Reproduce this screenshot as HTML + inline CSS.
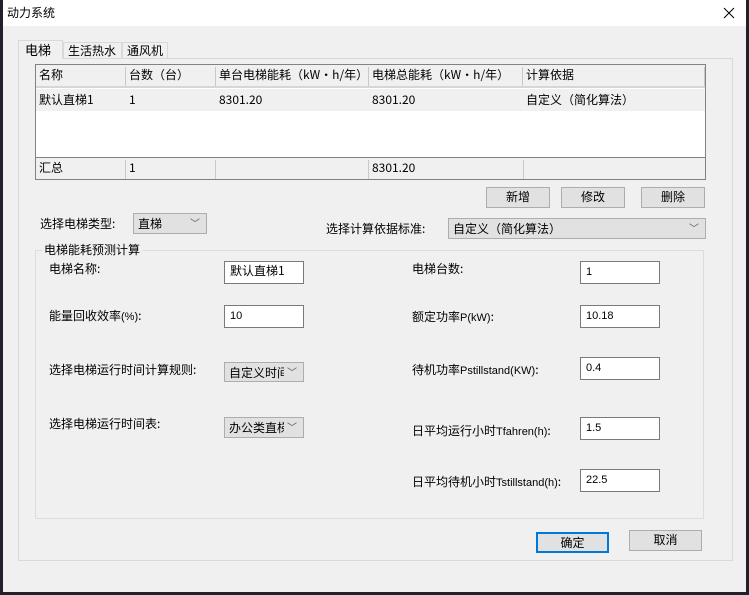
<!DOCTYPE html>
<html><head><meta charset="utf-8"><style>
*{margin:0;padding:0;box-sizing:border-box}
body{width:749px;height:595px;background:#1f2329;position:relative;overflow:hidden;font-family:"Noto Sans CJK SC","Liberation Sans",sans-serif;font-size:12px;color:#000}
.a{position:absolute}
.win{left:3px;top:0;width:743px;height:592px;background:#f0f0f0}
.title{left:3px;top:0;width:743px;height:26px;background:#fff}
.t{position:absolute;white-space:nowrap;line-height:14px;font-size:12px}
.l{font-family:"Liberation Sans",sans-serif;font-size:11px}
.inp{position:absolute;background:#fff;border:1px solid #7a7a7a;padding:3px 0 0 5px;font-size:11px;line-height:14px;font-family:"Liberation Sans",sans-serif}
.cmb{position:absolute;background:#e1e1e1;border:1px solid #adadad;padding:2px 0 0 4px;line-height:15px;overflow:hidden;white-space:nowrap;font-size:12px}
.cmb .ar{position:absolute;right:6px;top:1px;font-size:10px;color:#555}
.btn{position:absolute;background:#e1e1e1;border:1px solid #adadad;text-align:center;line-height:18px;font-size:12px}
.cell{position:absolute;white-space:nowrap;font-size:12px;line-height:14px}
</style></head><body>
<div class="a win"></div>
<div class="a title"></div>
<div class="t" style="left:7px;top:6px;font-size:12px">动力系统</div>
<svg class="a" style="left:723px;top:7px" width="12" height="12"><path d="M1 1L11 11M11 1L1 11" stroke="#000" stroke-width="1"/></svg>

<div class="a" style="left:18px;top:58px;width:715px;height:503px;border:1px solid #d9d9d9;background:#f0f0f0"></div>
<div class="a" style="left:18px;top:40px;width:45px;height:19px;border:1px solid #d9d9d9;border-bottom:none;background:#f0f0f0"></div>
<div class="a" style="left:63px;top:42px;width:59px;height:16px;border:1px solid #d9d9d9;border-bottom:none;background:#f0f0f0"></div>
<div class="a" style="left:122px;top:42px;width:46px;height:16px;border:1px solid #d9d9d9;border-bottom:none;background:#f0f0f0"></div>
<div class="t" style="left:25px;top:43px;font-size:13px">电梯</div>
<div class="t" style="left:68px;top:44px;font-size:12px">生活热水</div>
<div class="t" style="left:127px;top:44px;font-size:12px">通风机</div>

<div class="a" style="left:35px;top:64px;width:671px;height:116px;border:1px solid #828282;background:#fff"></div>
<div class="a" style="left:36px;top:65px;width:669px;height:23px;background:#f0f0f0;border-bottom:2px solid #d6d6d6"></div>
<div class="a" style="left:36px;top:89px;width:669px;height:22px;background:#f0f0f0"></div>
<div class="a" style="left:36px;top:157px;width:669px;height:22px;background:#f0f0f0;border-top:1px solid #828282"></div>
<div class="a" style="left:125px;top:67px;width:1px;height:19px;background:#c8c8c8"></div>
<div class="a" style="left:215px;top:67px;width:1px;height:19px;background:#c8c8c8"></div>
<div class="a" style="left:368px;top:67px;width:1px;height:19px;background:#c8c8c8"></div>
<div class="a" style="left:522px;top:67px;width:1px;height:19px;background:#c8c8c8"></div>
<div class="a" style="left:704px;top:67px;width:1px;height:19px;background:#c8c8c8"></div>
<div class="a" style="left:125px;top:160px;width:1px;height:19px;background:#c8c8c8"></div>
<div class="a" style="left:215px;top:160px;width:1px;height:19px;background:#c8c8c8"></div>
<div class="a" style="left:368px;top:160px;width:1px;height:19px;background:#c8c8c8"></div>
<div class="a" style="left:523px;top:160px;width:1px;height:19px;background:#c8c8c8"></div>
<div class="cell" style="left:39px;top:68px">名称</div>
<div class="cell" style="left:129px;top:68px">台数（台）</div>
<div class="cell" style="left:219px;top:68px">单台电梯能耗（kW·h/年）</div>
<div class="cell" style="left:372px;top:68px">电梯总能耗（kW·h/年）</div>
<div class="cell" style="left:526px;top:68px">计算依据</div>
<div class="cell" style="left:39px;top:93px">默认直梯1</div>
<div class="cell" style="left:129px;top:93px">1</div>
<div class="cell" style="left:219px;top:93px">8301.20</div>
<div class="cell" style="left:372px;top:93px">8301.20</div>
<div class="cell" style="left:526px;top:93px">自定义（简化算法）</div>
<div class="cell" style="left:39px;top:161px">汇总</div>
<div class="cell" style="left:129px;top:161px">1</div>
<div class="cell" style="left:372px;top:161px">8301.20</div>

<div class="btn" style="left:486px;top:187px;width:64px;height:21px">新增</div>
<div class="btn" style="left:561px;top:187px;width:64px;height:21px">修改</div>
<div class="btn" style="left:641px;top:187px;width:64px;height:21px">删除</div>

<div class="t" style="left:40px;top:217px">选择电梯类型:</div>
<div class="cmb" style="left:133px;top:213px;width:74px;height:21px">直梯<span class="ar">﹀</span></div>
<div class="t" style="left:326px;top:222px">选择计算依据标准:</div>
<div class="cmb" style="left:448px;top:218px;width:258px;height:21px">自定义（简化算法）<span class="ar">﹀</span></div>

<div class="a" style="left:35px;top:250px;width:669px;height:269px;border:1px solid #dcdcdc"></div>
<div class="t" style="left:42px;top:243px;background:#f0f0f0;padding:0 2px">电梯能耗预测计算</div>

<div class="t" style="left:49px;top:262px">电梯名称:</div>
<div class="inp" style="left:224px;top:261px;width:80px;height:23px;font-family:'Noto Sans CJK SC',sans-serif;font-size:12px;padding-top:2px">默认直梯1</div>
<div class="t" style="left:49px;top:309px">能量回收效率<span class="l">(%)</span>:</div>
<div class="inp" style="left:224px;top:305px;width:80px;height:23px">10</div>
<div class="t" style="left:49px;top:363px">选择电梯运行时间计算规则:</div>
<div class="cmb" style="left:224px;top:362px;width:80px;height:20px">自定义时间<span class="ar" style="background:#e1e1e1;padding-left:3px">﹀</span></div>
<div class="t" style="left:49px;top:417px">选择电梯运行时间表:</div>
<div class="cmb" style="left:224px;top:417px;width:80px;height:21px">办公类直梯<span class="ar" style="background:#e1e1e1;padding-left:3px">﹀</span></div>

<div class="t" style="left:412px;top:262px">电梯台数:</div>
<div class="inp" style="left:580px;top:261px;width:80px;height:23px">1</div>
<div class="t" style="left:412px;top:310px">额定功率<span class="l">P(kW)</span>:</div>
<div class="inp" style="left:580px;top:305px;width:80px;height:23px">10.18</div>
<div class="t" style="left:412px;top:363px">待机功率<span class="l">Pstillstand(KW)</span>:</div>
<div class="inp" style="left:580px;top:357px;width:80px;height:23px">0.4</div>
<div class="t" style="left:412px;top:424px">日平均运行小时<span class="l">Tfahren(h)</span>:</div>
<div class="inp" style="left:580px;top:417px;width:80px;height:23px">1.5</div>
<div class="t" style="left:412px;top:475px">日平均待机小时<span class="l">Tstillstand(h)</span>:</div>
<div class="inp" style="left:580px;top:469px;width:80px;height:23px">22.5</div>

<div class="btn" style="left:536px;top:532px;width:73px;height:21px;border:2px solid #0078d7;line-height:17px">确定</div>
<div class="btn" style="left:629px;top:530px;width:73px;height:21px">取消</div>
</body></html>
